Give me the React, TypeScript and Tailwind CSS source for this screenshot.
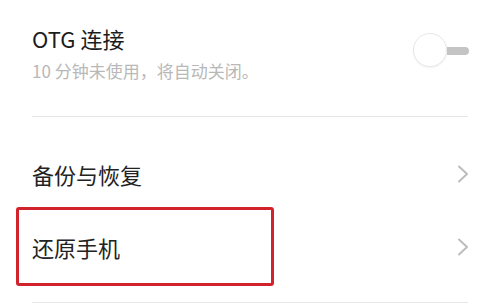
import React from "react";

function Chevron() {
  return (
    <svg width="12" height="18" viewBox="0 0 12 18" fill="none">
      <polyline
        points="2,1.5 10,9 2,16.5"
        stroke="#bdbdbd"
        strokeWidth="2"
        strokeLinecap="round"
        strokeLinejoin="round"
      />
    </svg>
  );
}

export default function App() {
  return (
    <div
      className="w-[483px] h-[306px] bg-white overflow-hidden"
      style={{ fontFamily: '"Noto Sans CJK SC", "Noto Sans", sans-serif' }}
    >
      <div className="flex items-start justify-between pt-[24px] pl-[32px] pr-[14px]">
        <div className="flex flex-col">
          <div className="text-[22px] leading-[28px] text-[#1c1c1c]">OTG 连接</div>
          <div className="mt-[7px] text-[17px] leading-[24px] text-[#b8b8b8]">
            10 分钟未使用，将自动关闭。
          </div>
        </div>
        <div className="mt-[9px] flex items-center">
          <div className="w-[34px] h-[34px] rounded-full border border-[#e8e8e8] bg-white shadow-[0_1px_2px_rgba(0,0,0,0.06)]" />
          <div className="w-[22px] h-[8px] mt-[2px] bg-[#c4c4c4] rounded-r-full" />
        </div>
      </div>
      <div className="mt-[33px] ml-[32px] mr-[15px] h-px bg-[#e6e6e6]" />
      <div className="pt-[20px]">
        <div className="h-[73px] flex items-center justify-between pl-[32px] pr-[14px]">
          <span className="text-[22px] leading-[28px] text-[#222]">备份与恢复</span>
          <Chevron />
        </div>
        <div className="relative h-[73px] flex items-center justify-between pl-[32px] pr-[14px]">
          <span className="text-[22px] leading-[28px] text-[#222]">还原手机</span>
          <Chevron />
          <div className="absolute left-[16px] top-[-3px] w-[258px] bottom-[-3px] border-[3px] border-[#d2232d] rounded-[3px]" />
        </div>
      </div>
      <div className="mt-[19px] ml-[32px] mr-[15px] h-px bg-[#e6e6e6]" />
    </div>
  );
}
